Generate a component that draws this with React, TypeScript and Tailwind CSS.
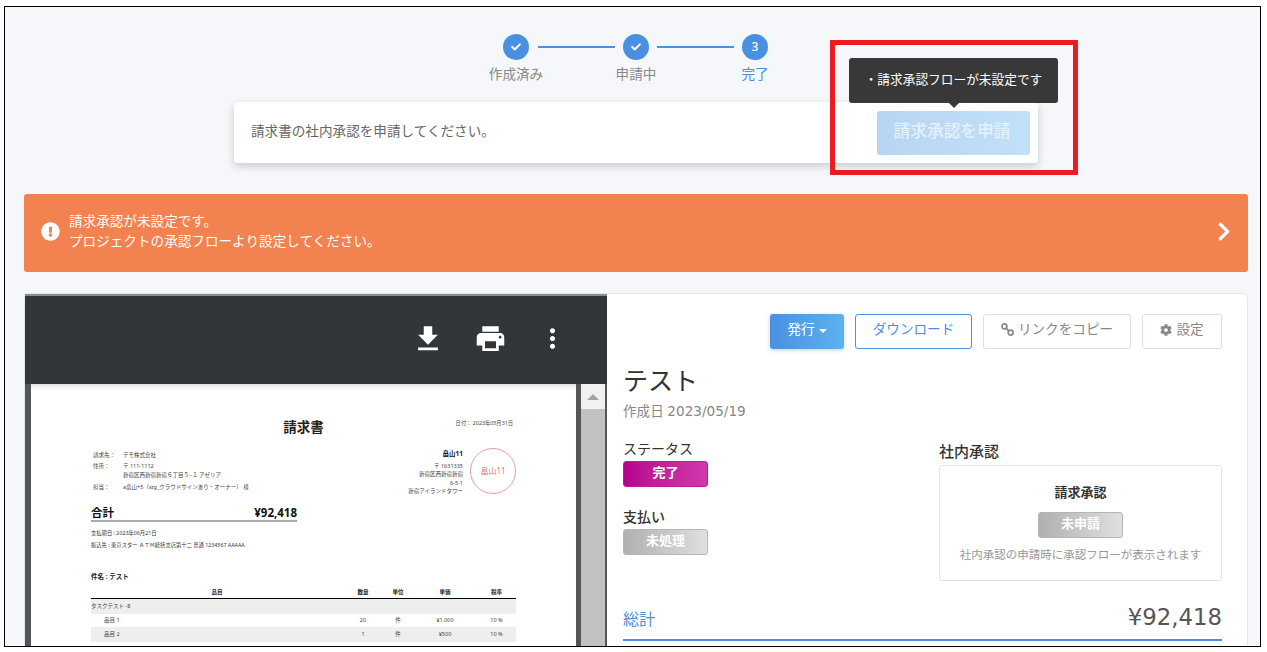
import { FaCheck, FaCog, FaExclamationCircle, FaChevronRight } from "react-icons/fa";
import { MdFileDownload, MdPrint, MdMoreVert } from "react-icons/md";

const font = { fontFamily: '"Noto Sans", "Noto Sans CJK JP", sans-serif' };

function StepDone() {
  return (
    <div className="flex h-[26px] w-[26px] shrink-0 items-center justify-center rounded-full bg-[#4a90e2] text-white">
      <FaCheck className="h-[10px] w-[10px]" />
    </div>
  );
}

function Stepper() {
  return (
    <div className="ml-[471px] pt-[27px]">
      <div className="ml-[27px] flex items-center">
        <StepDone />
        <div className="ml-[9px] mr-[8px] h-[2px] w-[77px] bg-[#4a90e2]" />
        <StepDone />
        <div className="mx-[8px] h-[2px] w-[77px] bg-[#4a90e2]" />
        <div className="flex h-[26px] w-[26px] shrink-0 items-center justify-center rounded-full bg-[#4a90e2] text-[12px] font-medium text-white">3</div>
      </div>
      <div className="mt-[4px] flex h-[20px] text-[13.6px] leading-[20px] text-[#888]">
        <div className="w-[80px] text-center">作成済み</div>
        <div className="ml-[40px] w-[80px] text-center">申請中</div>
        <div className="ml-[39px] w-[80px] text-center text-[#4a90e2]">完了</div>
      </div>
    </div>
  );
}

function RequestCard() {
  return (
    <div className="ml-[229px] mt-[18px] flex h-[61px] w-[804px] items-center justify-between rounded-[4px] bg-white pl-[17px] pr-[8px] shadow-[0_3px_8px_rgba(0,0,0,0.18)]">
      <span className="pb-[2px] text-[13.6px] text-[#666]">請求書の社内承認を申請してください。</span>
      <button className="h-[44px] w-[153px] rounded-[3px] bg-gradient-to-r from-[#b8d4f3] to-[#c0e1f8] pb-[4px] pr-[3px] text-[16.7px] font-medium text-[#e6f1fb]">請求承認を申請</button>
    </div>
  );
}

function Banner() {
  return (
    <div className="ml-[19px] mt-[31px] flex h-[78px] w-[1224px] items-center rounded-[3px] bg-[#f28250] pb-[4px] pl-[17px] pr-[17px] text-white">
      <FaExclamationCircle className="h-[19px] w-[19px] shrink-0" />
      <div className="ml-[9px] text-[13.6px] leading-[20px]">
        <div>請求承認が未設定です。</div>
        <div>プロジェクトの承認フローより設定してください。</div>
      </div>
      <FaChevronRight className="ml-auto h-[21px] w-[14px]" />
    </div>
  );
}

function Row({ name, qty, price, gray, indent }: { name: string; qty?: string; price?: string; gray?: boolean; indent?: boolean }) {
  return (
    <div className={`grid grid-cols-[252px_40px_30px_64px_39px] items-center text-[5.5px] text-[#444] ${gray ? "h-[15px] bg-[#eeeeee]" : "h-[13px]"}`}>
      <div className={indent ? "pl-[13px]" : ""}>{name}</div>
      <div className="text-center">{qty}</div>
      <div className="text-center">{qty ? "件" : ""}</div>
      <div className="text-center">{price}</div>
      <div className="text-center">{qty ? "10 %" : ""}</div>
    </div>
  );
}

function Paper() {
  return (
    <div className="h-[300px] w-[545px] overflow-hidden bg-white pl-[60px] pr-[60px] text-black shadow-[inset_0_6px_6px_-6px_rgba(0,0,0,0.25)]">
      <div className="relative h-[51px] pt-[33px]">
        <div className="text-center text-[13.5px] font-bold leading-[20px] text-[#222]">請求書</div>
        <div className="absolute right-[3px] top-[35px] text-[5.3px] leading-[8px] text-[#444]">日付： 2023年05月31日</div>
      </div>
      <div className="flex h-[68px] items-start justify-between pt-[16px]">
        <div className="pl-[2px] text-[5.5px] leading-[9px] text-[#444]">
          <div className="flex h-[11px]"><span className="w-[30px]">請求先：</span><span>デモ株式会社</span></div>
          <div className="flex"><span className="w-[30px]">住所：</span><span>〒 111-1112<br />新宿区西新宿新宿６丁目５−１ アゼリア</span></div>
          <div className="mt-[3px] flex"><span className="w-[30px]">担当：</span><span>a畠山+5（stg_クラウドサインあり・オーナー） 様</span></div>
        </div>
        <div className="-mt-[2px] flex items-start">
          <div className="text-right text-[5.5px] leading-[8.4px] text-[#444]">
            <div className="mb-[3px] text-[6.5px] font-bold leading-[10px] text-[#111]">畠山11</div>
            <div>〒 1631335</div>
            <div>新宿区西新宿新宿</div>
            <div>6-5-1</div>
            <div>新宿アイランドタワー</div>
          </div>
          <div className="ml-[7px] mt-[-1px] flex h-[46px] w-[46px] items-center justify-center rounded-full border border-[#e2a19f] text-[8px] text-[#d9807e]">畠山11</div>
        </div>
      </div>
      <div className="mt-[3px] flex h-[16px] w-[206px] items-center justify-between border-b-2 border-[#aaaaaa] pb-[1px] text-[11.5px] font-bold text-[#111]">
        <span>合計</span>
        <span>¥92,418</span>
      </div>
      <div className="mt-[5px] text-[5.3px] leading-[12px] text-[#333]">
        <div>支払期日 : 2023年06月21日</div>
        <div>振込先 : 東京スター ＡＴＭ統括支店第十二 普通 1234567 AAAAA</div>
      </div>
      <div className="mt-[21px] text-[6.5px] font-bold leading-[10px] text-[#222]">件名 : テスト</div>
      <div className="mt-[5px] grid h-[12px] grid-cols-[252px_40px_30px_64px_39px] items-center border-b border-black text-center text-[5.5px] font-bold text-[#222]">
        <div>品目</div><div>数量</div><div>単位</div><div>単価</div><div>税率</div>
      </div>
      <Row name="タスクテスト -8" gray />
      <Row name="品目 1" qty="20" price="¥1,000" indent />
      <Row name="品目 2" qty="1" price="¥500" gray indent />
    </div>
  );
}

function PdfViewer() {
  return (
    <div className="w-[582px] shrink-0 border-t-[2px] border-[#8c8c8c]">
      <div className="flex h-[88px] items-center bg-[#323639] pb-[3px] pl-[386px] text-white">
        <MdFileDownload className="h-[34px] w-[34px]" />
        <MdPrint className="ml-[29px] h-[33px] w-[33px]" />
        <MdMoreVert className="ml-[30px] h-[31px] w-[31px]" />
      </div>
      <div className="flex h-[300px] bg-[#525659]">
        <div className="w-[6px] shrink-0" />
        <Paper />
        <div className="w-[5px] shrink-0" />
        <div className="flex w-[24px] shrink-0 flex-col bg-[#f1f1f1]">
          <div className="flex h-[25px] items-center justify-center">
            <div className="h-0 w-0 border-x-[6px] border-b-[6px] border-x-transparent border-b-[#a3a3a3]" />
          </div>
          <div className="flex-1 bg-[#c1c1c1]" />
        </div>
      </div>
    </div>
  );
}

function Badge({ text, gradient }: { text: string; gradient: string }) {
  return <div className={`flex h-[26px] w-[85px] items-center justify-center rounded-[3px] border pb-[2px] text-[13px] font-bold text-white ${gradient}`}>{text}</div>;
}

const grayBadge = "border-[#b5b5b5] bg-gradient-to-r from-[#b0b0b0] to-[#e0e0e0]";

function LinkIcon() {
  return (
    <svg viewBox="0 0 13 13" className="h-[13px] w-[13px]" fill="none" stroke="currentColor" strokeWidth="1.7">
      <circle cx="3.4" cy="3.4" r="2.5" />
      <circle cx="9.6" cy="9.6" r="2.5" />
      <path d="M4.6 4.6l3.8 3.8" />
    </svg>
  );
}

function Detail() {
  return (
    <div className="flex-1 pl-[16px] pr-[25px] pt-[20px] text-[#333]">
      <div className="flex h-[35px] justify-end gap-[11px] text-[13.6px]">
        <button className="flex w-[74px] items-center justify-center gap-[4px] rounded-[3px] bg-gradient-to-r from-[#4a90e2] to-[#5db2ec] pb-[4px] text-white shadow-[0_1px_4px_rgba(0,0,0,0.2)]">
          発行<span className="mt-[3px] h-0 w-0 border-x-[4px] border-t-[4px] border-x-transparent border-t-white" />
        </button>
        <button className="w-[117px] rounded-[3px] border border-[#4a90e2] bg-white pb-[4px] text-[#4a90e2]">ダウンロード</button>
        <button className="flex w-[148px] items-center justify-center gap-[4px] rounded-[3px] border border-[#dcdfe4] bg-white pb-[4px] text-[#888]">
          <LinkIcon />リンクをコピー
        </button>
        <button className="flex w-[80px] items-center justify-center gap-[4px] rounded-[3px] border border-[#dcdfe4] bg-white pb-[4px] text-[#888]">
          <FaCog className="h-[12px] w-[12px]" />設定
        </button>
      </div>
      <div className="mt-[12px] text-[25px] leading-[38px] text-[#333]">テスト</div>
      <div className="mt-[2px] text-[13.6px] leading-[20px] text-[#888]">作成日 <span className="font-['DejaVu_Sans']">2023/05/19</span></div>
      <div className="mt-[17px] flex h-[146px] justify-between">
        <div>
          <div className="mt-[1px] h-[22px] text-[14px] leading-[20px]">ステータス</div>
          <Badge text="完了" gradient="border-[#c01a9c] bg-gradient-to-r from-[#b5008f] to-[#d038ac]" />
          <div className="mt-[19px] h-[23px] text-[14px] font-medium leading-[22px]">支払い</div>
          <Badge text="未処理" gradient={grayBadge} />
        </div>
        <div className="w-[283px]">
          <div className="mt-[2px] h-[23px] text-[15px] font-medium leading-[22px]">社内承認</div>
          <div className="mt-[2px] flex h-[116px] flex-col items-center rounded-[3px] border border-[#e0e4ea] pt-[16px]">
            <div className="text-[13px] font-bold leading-[20px]">請求承認</div>
            <div className="mt-[10px]"><Badge text="未申請" gradient={grayBadge} /></div>
            <div className="mt-[7px] text-[11.5px] leading-[20px] text-[#999]">社内承認の申請時に承認フローが表示されます</div>
          </div>
        </div>
      </div>
      <div className="mt-[15px] flex h-[42px] items-center justify-between border-b-2 border-[#4a90e2]">
        <span className="text-[16px] text-[#4a90e2]">総計</span>
        <span className="pb-[3px] font-['DejaVu_Sans'] text-[22.8px] text-[#555]">¥92,418</span>
      </div>
    </div>
  );
}

export default function App() {
  return (
    <div className="h-[652px] w-[1267px] overflow-hidden bg-white" style={font}>
      <div className="relative ml-[4px] mt-[6px] h-[641px] w-[1257px] overflow-hidden border border-black bg-[#f5f7fb]">
        <Stepper />
        <RequestCard />
        <Banner />
        <div className="ml-[19px] mt-[21px] flex h-[400px] w-[1224px] rounded-[4px] border border-[#e4e7ed] bg-white">
          <PdfViewer />
          <Detail />
        </div>
        <div className="absolute left-[844px] top-[51px] flex h-[45px] w-[209px] items-center justify-center rounded-[3px] bg-[#383838] pb-[2px] text-[12.7px] text-white">
          ・請求承認フローが未設定です
          <div className="absolute -bottom-[5px] left-1/2 h-0 w-0 -translate-x-1/2 border-x-[5px] border-t-[5px] border-x-transparent border-t-[#383838]" />
        </div>
        <div className="pointer-events-none absolute left-[825px] top-[33px] h-[135px] w-[248px] border-[5px] border-[#ed1c24]" />
      </div>
    </div>
  );
}
